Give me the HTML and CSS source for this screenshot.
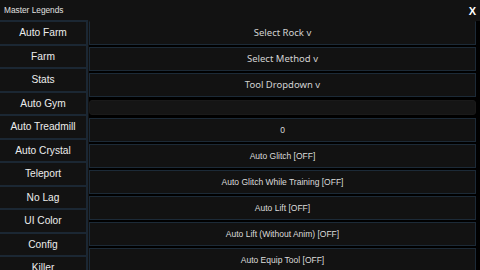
FILE: index.html
```html
<!DOCTYPE html>
<html lang="en">
<head>
  <meta charset="UTF-8">
  <title>Master Legends</title>
  <link rel="stylesheet" href="styles.css">
</head>
<body>
  <div class="window">
    <header class="titlebar">
      <span class="title">Master Legends</span>
      <button class="close">X</button>
    </header>

    <div class="panes">
      <!-- tab list -->
      <ul class="tabs">
        <li class="tab">Auto Farm</li>
        <li class="tab">Farm</li>
        <li class="tab">Stats</li>
        <li class="tab">Auto Gym</li>
        <li class="tab">Auto Treadmill</li>
        <li class="tab">Auto Crystal</li>
        <li class="tab">Teleport</li>
        <li class="tab">No Lag</li>
        <li class="tab">UI Color</li>
        <li class="tab">Config</li>
        <li class="tab">Killer</li>
      </ul>

      <!-- options for the current tab -->
      <div class="options">
        <div class="row row-first dropdown">Select Rock v</div>
        <div class="row dropdown">Select Method v</div>
        <div class="row dropdown">Tool Dropdown v</div>
        <div class="textbox"></div>
        <div class="row">0</div>
        <div class="row">Auto Glitch [OFF]</div>
        <div class="row">Auto Glitch While Training [OFF]</div>
        <div class="row">Auto Lift [OFF]</div>
        <div class="row">Auto Lift (Without Anim) [OFF]</div>
        <div class="row">Auto Equip Tool [OFF]</div>
      </div>
    </div>
  </div>
</body>
</html>
```

FILE: styles.css
```css
body {
  margin: 0;
  padding: 0;
  overflow: hidden;
  background-color: #121212;
  width: 480px;
  height: 270px;
  font-family: "Liberation Sans", Arial, sans-serif;
}

.window {
  display: flex;
  flex-direction: column;
  width: 480px;
  height: 270px;
  background-color: #121212;
  overflow: hidden;
}

.titlebar {
  display: flex;
  justify-content: space-between;
  align-items: center;
  height: 20px;
  padding: 0 4px;
  flex-shrink: 0;
}

.title {
  font-size: 8.3px;
  color: #e0e0e0;
}

.close {
  background: none;
  border: none;
  padding: 0;
  margin-top: 1px;
  font-family: "Liberation Sans", Arial, sans-serif;
  font-size: 11px;
  font-weight: bold;
  color: #ffffff;
}

.panes {
  display: flex;
  flex: 1;
  min-height: 0;
}

/* left tab column */
.tabs {
  display: flex;
  flex-direction: column;
  gap: 2px;
  list-style: none;
  margin: 0;
  padding: 2px 2px 0 0;
  width: 86px;
  background-color: #1b2733;
  flex-shrink: 0;
}

.tab {
  display: flex;
  align-items: center;
  justify-content: center;
  height: 21.5px;
  flex-shrink: 0;
  background-color: #121212;
  font-size: 10.2px;
  color: #ececec;
}

/* right option list */
.options {
  display: flex;
  flex-direction: column;
  gap: 2px;
  flex: 1;
  margin: 1px 0 0 1px;
  padding: 0 4px 0 0;
  background-color: #000000;
}

.row {
  display: flex;
  align-items: center;
  justify-content: center;
  height: 24px;
  flex-shrink: 0;
  box-sizing: border-box;
  background-color: #121212;
  border: 1px solid #1c2a37;
  font-size: 8.5px;
  color: #dcdcdc;
}

.row-first {
  border-top-color: #121212;
  height: 23.5px;
}

.dropdown {
  font-family: "Noto Sans", sans-serif;
  font-size: 9.5px;
  color: #d2d2d2;
}

.textbox {
  height: 15px;
  flex-shrink: 0;
  margin: 1px 0;
  box-sizing: border-box;
  background-color: #151515;
  border: 1px solid #1a1a1a;
  border-radius: 3px;
}
```
